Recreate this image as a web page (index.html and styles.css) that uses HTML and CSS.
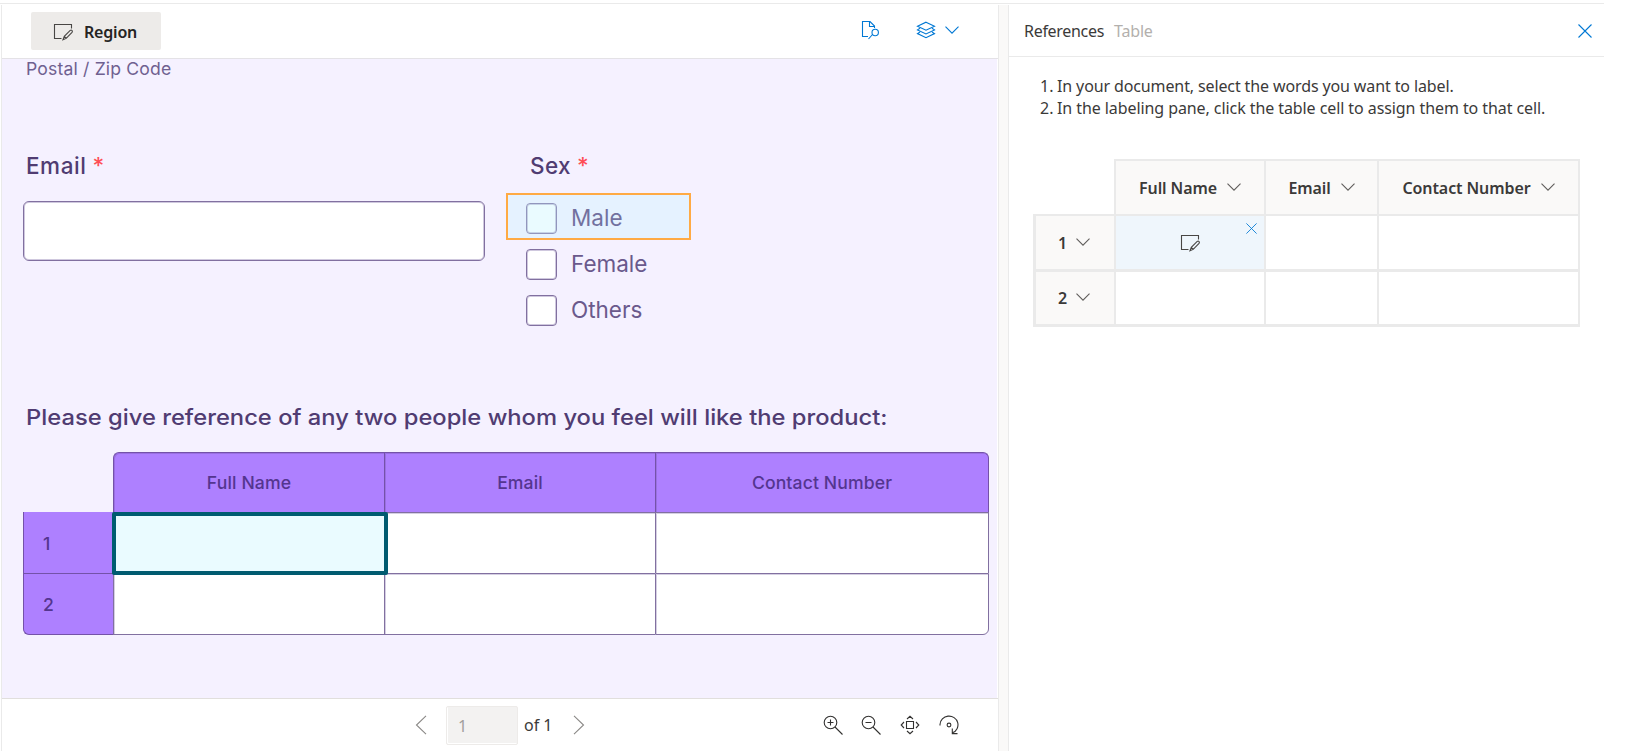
FILE: index.html
```html
<!DOCTYPE html>
<html lang="en">
<head>
<meta charset="utf-8">
<title>References</title>
<link rel="stylesheet" href="styles.css">
</head>
<body>
<svg class="defs" aria-hidden="true">
  <symbol id="chevron" viewBox="0 0 14 8"><path d="M.5.7 7 7.2 13.5.7"/></symbol>
  <symbol id="region" viewBox="0 0 20 18"><path d="M8.500 15.500H1.500V1.500H18.500V5.500M10 16.800 11.300 13.300 17.200 7.400Q18.300 6.700 19 7.500T19 9.400L13.200 15.400Z M11.300 13.300 13.200 15.400"/></symbol>
  <symbol id="cross" viewBox="0 0 14 14"><path d="M.5.5 13.500 13.500M13.500.5.5 13.500"/></symbol>
</svg>
<div class="app">
  <main class="viewer">
    <header class="toolbar">
      <button class="region-btn"><svg class="i-region"><use href="#region"/></svg><span>Region</span></button>
      <div class="tools">
        <svg class="i-find" viewBox="0 0 18 20"><path d="M7 16.500H1.500V1.500H9L13.500 6V8M8.500 1.500V6.500H13.500M11.500 14.500 7.500 19"/><circle cx="14.200" cy="12.500" r="3.200"/></svg>
        <svg class="i-layers" viewBox="0 0 20 18"><path d="M10 1.200 18.500 5.200 10 9.200 1.500 5.200ZM4 7.300 1.500 8.900 10 12.900 18.500 8.900 16 7.300M4 11 1.500 12.600 10 16.700 18.500 12.600 16 11"/></svg>
        <svg class="chev"><use href="#chevron"/></svg>
      </div>
    </header>
    <section class="document">
      <div class="postal">Postal / Zip Code</div>
      <div class="fields">
        <div class="field-email">
          <div class="label"><span class="t-email">Email</span><span class="star">*</span></div>
          <div class="input"></div>
        </div>
        <div class="field-sex">
          <div class="label"><span class="t-sex">Sex</span><span class="star">*</span></div>
          <div class="options">
            <div class="mark"></div>
            <div class="option marked"><i class="box"></i><span>Male</span></div>
            <div class="option"><i class="box"></i><span>Female</span></div>
            <div class="option"><i class="box"></i><span>Others</span></div>
          </div>
        </div>
      </div>
      <div class="question"><span>Please give reference of any two people whom you feel will like the product:</span></div>
      <div class="form-table">
        <div class="blank"></div>
        <div class="fh first"><span>Full Name</span></div>
        <div class="fh"><span>Email</span></div>
        <div class="fh last"><span>Contact Number</span></div>
        <div class="fr">1</div><div class="fc picked"><div class="pick"></div></div><div class="fc"></div><div class="fc"></div>
        <div class="fr end">2</div><div class="fc"></div><div class="fc"></div><div class="fc corner"></div>
      </div>
    </section>
    <footer class="pager">
      <svg class="i-prev" viewBox="0 0 12 20"><path d="M11 .8 1.500 10 11 19.200"/></svg>
      <div class="page">1</div>
      <span class="of">of 1</span>
      <svg class="i-next" viewBox="0 0 12 20"><path d="M1 .8 10.500 10 1 19.200"/></svg>
      <div class="zooms">
        <svg viewBox="0 0 20 20"><circle cx="7.500" cy="7.500" r="6.300"/><path d="M12 12 19.500 19.500M4.500 7.500H10.500M7.500 4.500V10.500"/></svg>
        <svg viewBox="0 0 20 20"><circle cx="7.500" cy="7.500" r="6.300"/><path d="M12 12 19.500 19.500M4.500 7.500H10.500"/></svg>
        <svg viewBox="0 0 20 20"><path d="M6.500 6.500H13.500V13.500H6.500ZM7 4 10 1.300 13 4M7 16 10 18.700 13 16M4 7 1.200 10 4 13M16 7 18.800 10 16 13"/></svg>
        <svg viewBox="0 0 20 20"><path d="M1 10.500V9.500A9 8.700 0 1 1 13.500 17.800M13.300 13.500V18.600H18.500"/><circle cx="10" cy="10" r="1.900"/></svg>
      </div>
    </footer>
  </main>
  <aside class="panel">
    <header class="panel-head"><span class="t-ref">References</span><span class="t-table">Table</span><svg class="close"><use href="#cross"/></svg></header>
    <div class="steps">
      <div><b>1.</b><span class="s1">In your document, select the words you want to label.</span></div>
      <div><b>2.</b><span class="s2">In the labeling pane, click the table cell to assign them to that cell.</span></div>
    </div>
    <div class="grid">
      <div class="gblank"></div>
      <div class="gh"><span>Full Name</span><svg class="chev"><use href="#chevron"/></svg></div>
      <div class="gh"><span>Email</span><svg class="chev"><use href="#chevron"/></svg></div>
      <div class="gh"><span>Contact Number</span><svg class="chev"><use href="#chevron"/></svg></div>
      <div class="gr"><span>1</span><svg class="chev"><use href="#chevron"/></svg></div>
      <div class="gc on"><svg class="i-region"><use href="#region"/></svg><svg class="clear" viewBox="0 0 14 14"><use href="#cross"/></svg></div><div class="gc"></div><div class="gc"></div>
      <div class="gr"><span>2</span><svg class="chev"><use href="#chevron"/></svg></div>
      <div class="gc"></div><div class="gc"></div><div class="gc"></div>
    </div>
  </aside>
</div>
</body>
</html>
```

FILE: styles.css
```css
* { box-sizing: border-box; }
body { margin: 0; width: 1627px; height: 751px; overflow: hidden; background: #fff; color: #3b3a39; font: 16px/22px "Noto Sans", "Open Sans", sans-serif; }
svg { fill: none; stroke: currentColor; stroke-width: 1.1; flex: none; display: block; }
span { white-space: nowrap; }
.defs { position: absolute; width: 0; height: 0; }
.app { display: flex; width: 1604px; height: 748px; margin-top: 3px; padding-top: 1px; border-top: 1px solid #eaeaea; background: linear-gradient(#faf9f8, #faf9f8) 999px 1px / 9px 100% no-repeat; }
.chev { width: 14px; height: 8px; }

.viewer { width: 998px; margin-left: 1px; border: solid #eaeaea; border-width: 0 1px; display: flex; flex-direction: column; background: #fff; }
.toolbar { height: 54px; border-bottom: 1px solid #e4e2e6; display: flex; align-items: flex-start; justify-content: space-between; padding: 7px 39px 0 29px; }
.region-btn { width: 130px; height: 38px; border: 0; border-radius: 2px; background: #edebe9; color: #252423; display: flex; align-items: center; padding: 1px 0 0 22px; gap: 11px; font: 600 16px/22px "Noto Sans", sans-serif; letter-spacing: -.2px; }
.i-region { width: 20px; height: 18px; color: #484644; }
.tools { display: flex; color: #0078d4; height: 36px; align-items: center; }
.i-find { width: 18px; height: 20px; margin-right: 37px; }
.i-layers { width: 20px; height: 18px; margin-right: 9px; }

.document { width: 995px; height: 639px; overflow: hidden; background: #f5f1ff; font-family: Inter, sans-serif; color: #5d4a80; }
.postal { font-size: 17.6px; line-height: 24px; letter-spacing: .16px; margin: -2px 0 0 24px; color: #6f6090; }
.fields { display: flex; padding: 71px 0 0 21px; height: 322px; }
.field-email { width: 504px; }
.label { font-size: 22.5px; font-weight: 500; line-height: 28px; padding-left: 3px; display: flex; gap: 6px; color: #503c72; }
.t-email { letter-spacing: .55px; }
.t-sex { letter-spacing: .4px; }
.star { color: #ff4d55; }
.input { width: 462px; height: 60px; margin-top: 21px; background: #fff; border: 1px solid #8170a0; border-radius: 6px; box-shadow: inset 0 0 0 1px #cfc8de; }
.options { position: relative; margin: 15px 0 0 -1px; }
.option { position: relative; height: 46px; display: flex; align-items: center; gap: 14px; font-size: 22.5px; color: #6a598c; }
.box { width: 31px; height: 31px; background: #fff; border: 1px solid #8170a0; border-radius: 4px; box-shadow: inset 0 0 0 1px #cfc8de; }
.marked { color: #72719f; }
.marked .box { background: #eafbff; border-color: #9296bd; box-shadow: inset 0 0 0 1px #c6d3e6; }
.mark { position: absolute; left: -20px; top: -2px; width: 185px; height: 47px; border: 2px solid #ffaa44; background: #e5f2ff; }
.question { font-size: 21.6px; font-weight: 500; line-height: 28px; padding-left: 24px; color: #503c72; height: 28px; }
.question span { display: inline-block; transform: scaleX(1.1); transform-origin: 0 50%; }
.form-table { display: grid; grid-template-columns: 90px 271px 271px 334px; grid-template-rows: 60px 61px 62px; margin: 21px 0 0 21px; width: 966px; font-size: 17.6px; font-weight: 500; letter-spacing: .12px; color: #54358f; }
.fh { background: #ae80ff; border: solid #7452a8; border-width: 1px 0 0 1px; box-shadow: inset 1px 1px 0 #9a70e2; display: flex; align-items: center; justify-content: center; }
.fh.first { border-radius: 6px 0 0 0; }
.fh.last { border-right-width: 1px; border-radius: 0 6px 0 0; }
.fr { background: #ae80ff; border-left: 1px solid #7452a8; padding: 2px 0 0 19px; display: flex; align-items: center; }
.fr.end { border-radius: 0 0 0 6px; border-bottom: 1px solid #7452a8; border-top: 1px solid #7452a8; padding-top: 1px; }
.fc { background: #fff; border: solid #8170a0; border-width: 1px 0 0 1px; box-shadow: inset 1px 1px 0 #d5cfe2; position: relative; }
.fc:nth-child(4n) { border-right-width: 1px; }
.fc:nth-child(n+10) { border-bottom-width: 1px; }
.corner { border-radius: 0 0 6px 0; }
.picked { z-index: 1; }
.pick { position: absolute; left: -2px; top: -1px; width: 276px; height: 63px; border: 4px solid #005b70; border-radius: 2px; background: #eafbff; }

.pager { flex: 1; border-top: 1px solid #e1dfdd; display: flex; align-items: center; padding: 0 39px 0 413px; }
.i-prev, .i-next { width: 12px; height: 20px; color: #8a8886; }
.page { width: 72px; height: 39px; margin-left: 19px; padding: 8px 0 0 11px; border: 1px solid #edebe9; border-radius: 2px; background: #f3f2f1; box-shadow: inset 1px -1px 0 #fff; color: #a19f9d; }
.of { margin-left: 6px; margin-right: 20px; }
.zooms { margin-left: auto; display: flex; gap: 18.800px; color: #323130; }
.zooms svg { width: 20px; height: 20px; }

.panel { flex: 1; margin-left: 9px; border-left: 1px solid #eaeaea; background: #fff; }
.panel-head { height: 52px; border-bottom: 1px solid #eaeaea; display: flex; align-items: center; padding: 0 12px 0 15px; }
.t-ref { letter-spacing: -.3px; }
.t-table { margin-left: 10px; letter-spacing: -.2px; color: #b3b0ad; }
.close { width: 14px; height: 14px; color: #0078d4; margin-left: auto; }
.steps { padding: 18px 0 0 31px; }
.steps div { display: flex; }
.steps b { font-weight: 400; width: 17px; flex: none; }
.s1 { letter-spacing: -.12px; }
.s2 { letter-spacing: -.08px; }
.grid { display: grid; grid-template-columns: 81px 150px 113px 203px; grid-template-rows: 57px 56px 55px; margin: 40px 0 0 24px; width: 547px; font-weight: 600; letter-spacing: -.1px; }
.gh, .gr { background: #faf9f8; display: flex; align-items: center; }
.gh { border: solid #eaeaea; border-width: 2px 0 2px 2px; justify-content: center; gap: 10px; }
.gh:nth-child(4), .gc:nth-child(4n) { border-right: 2px solid #eaeaea; }
.gr { border: solid #eaeaea; border-width: 0 0 3px 3px; padding-left: 22px; gap: 9px; }
.gc { border: solid #eaeaea; border-width: 0 0 3px 2px; position: relative; display: flex; align-items: center; justify-content: center; }
.gr:nth-child(5) { border-top: 2px solid #eaeaea; margin-top: -2px; }
.on { background: #eff6fc; }
.clear { position: absolute; right: 7px; top: 7px; width: 11px; height: 11px; color: #0078d4; }
.grid .chev { color: #605e5c; margin-top: -2px; }
```
